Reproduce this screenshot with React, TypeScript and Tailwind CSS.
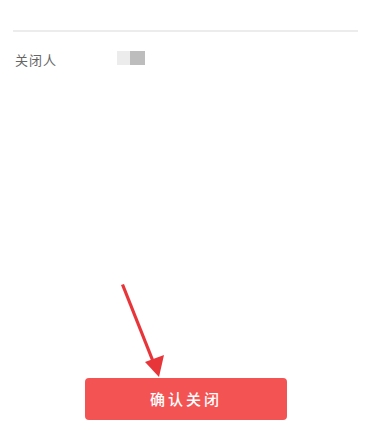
export default function App() {
  return (
    <div
      className="relative flex flex-col w-[387px] h-[430px] bg-white overflow-hidden"
      style={{ fontFamily: '"Noto Sans CJK SC", "Noto Sans", sans-serif' }}
    >
      <div className="pt-[30px] pl-[13px] pr-[29px]">
        <div className="h-[2px] bg-[#ececec]" />
        <div className="flex items-center h-[56px] pl-[2px]">
          <span className="w-[102px] text-[13px] text-[#666] tracking-[1px]">关闭人</span>
          <div className="flex h-[14px] mb-[4px]">
            <div className="w-[13px] bg-[#ececec]" />
            <div className="w-[15px] bg-[#bdbdbd]" />
          </div>
        </div>
      </div>

      <div className="flex-1" />

      <div className="flex pl-[85px] pb-[10px]">
        <button className="w-[202px] h-[42px] rounded-[4px] bg-[#f45353] text-white text-[15px] font-medium tracking-[3px] flex items-center justify-center">
          确认关闭
        </button>
      </div>

      {/* annotation arrow drawn over the page */}
      <svg className="absolute left-0 top-0 pointer-events-none" width="387" height="430" viewBox="0 0 387 430">
        <path d="M121 285 L124 284 L155 362 L152 363 Z" fill="#e8353a" />
        <polygon points="145,362 164,355 159,377" fill="#e8353a" />
      </svg>
    </div>
  );
}
